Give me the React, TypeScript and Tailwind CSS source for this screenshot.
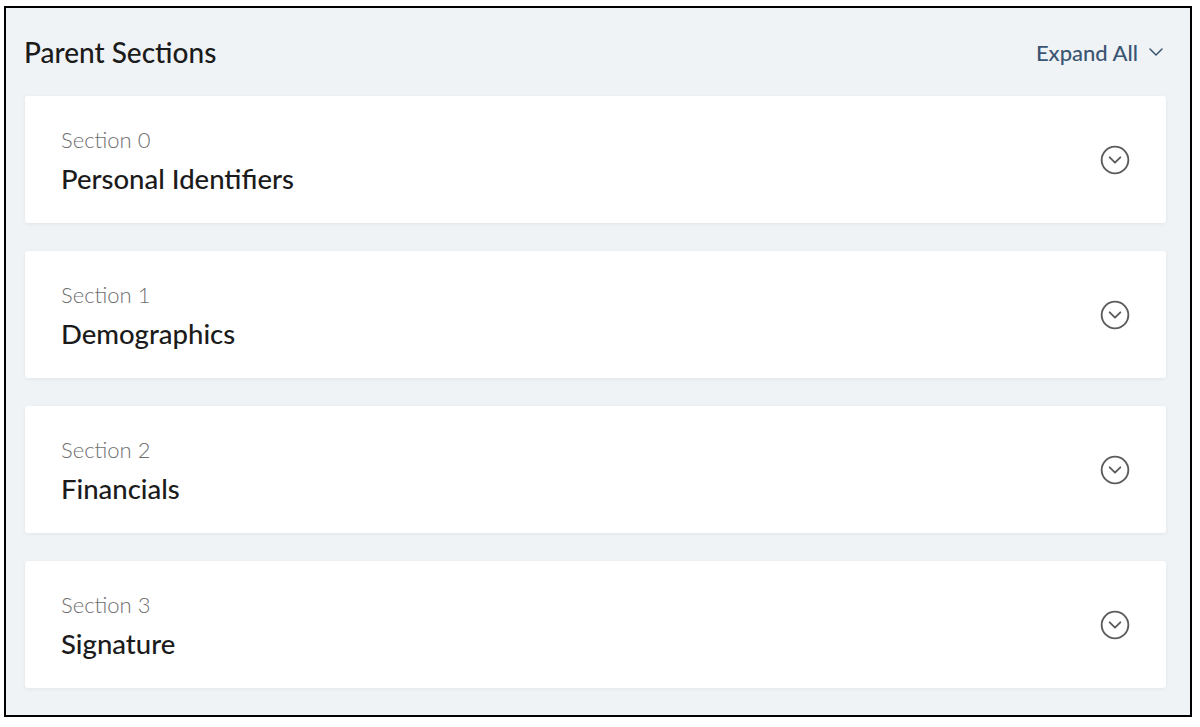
import React from 'react';
import { ChevronDown, CircleChevronDown } from 'lucide-react';

const sections = [
  { id: 0, title: 'Personal Identifiers' },
  { id: 1, title: 'Demographics' },
  { id: 2, title: 'Financials' },
  { id: 3, title: 'Signature' },
];

const SectionCard: React.FC<{ id: number; title: string }> = ({ id, title }) => (
  <div className="h-[127px] bg-white rounded-[3px] shadow-[0_1px_4px_rgba(0,0,0,0.06)] flex items-center justify-between pl-[36px] pr-[35px]">
    <div>
      <div className="text-[22px] leading-[38px] font-light text-[#707070]">Section {id}</div>
      <div className="text-[27.5px] leading-[40px] font-medium text-[#1b1b1b]">{title}</div>
    </div>
    <CircleChevronDown size={32} strokeWidth={1.4} className="text-[#5c5c5c]" />
  </div>
);

export default function App() {
  return (
    <div className="h-[727px] bg-white pt-[6px] pl-[4px]" style={{ fontFamily: 'Lato, "Noto Sans", sans-serif' }}>
      <div className="w-[1188px] h-[711px] border-2 border-black bg-[#f0f3f6] pl-[19px] pr-[24px]">
        <div className="h-[88px] flex items-center justify-between">
          <h2 className="text-[28px] font-medium text-[#1b1b1b] -ml-[1px]">Parent Sections</h2>
          <button className="flex items-center gap-[6px] text-[22px] font-medium text-[#3a5572]">
            <span>Expand All</span>
            <ChevronDown size={24} strokeWidth={1.5} className="-mr-[2px]" />
          </button>
        </div>
        <div className="flex flex-col gap-[28px]">
          {sections.map(s => (
            <SectionCard key={s.id} id={s.id} title={s.title} />
          ))}
        </div>
      </div>
    </div>
  );
}
